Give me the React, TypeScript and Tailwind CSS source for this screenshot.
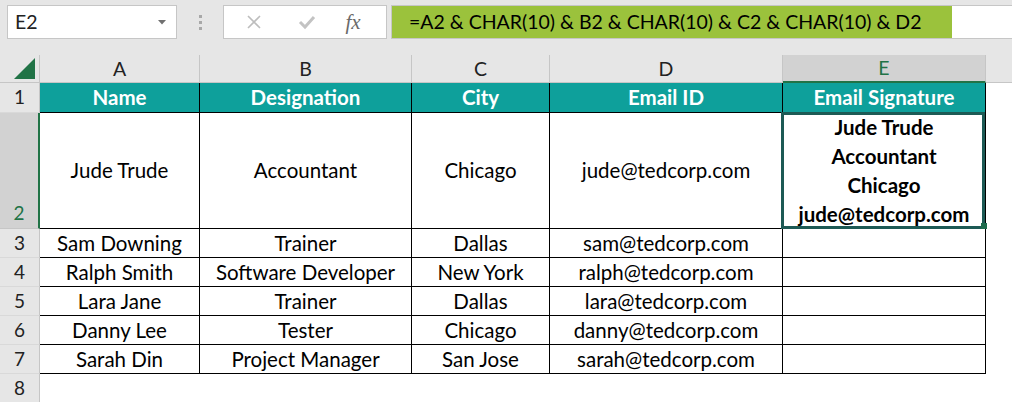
import React from 'react';

const cols = ['A', 'B', 'C', 'D', 'E'];
const widths = ['w-[160px]', 'w-[212px]', 'w-[138px]', 'w-[233px]', 'w-[203px]'];
const headers = ['Name', 'Designation', 'City', 'Email ID', 'Email Signature'];

const rows = [
  ['Sam Downing', 'Trainer', 'Dallas', 'sam@tedcorp.com'],
  ['Ralph Smith', 'Software Developer', 'New York', 'ralph@tedcorp.com'],
  ['Lara Jane', 'Trainer', 'Dallas', 'lara@tedcorp.com'],
  ['Danny Lee', 'Tester', 'Chicago', 'danny@tedcorp.com'],
  ['Sarah Din', 'Project Manager', 'San Jose', 'sarah@tedcorp.com'],
];

const first = ['Jude Trude', 'Accountant', 'Chicago', 'jude@tedcorp.com'];

const RowHead: React.FC<{ n: number; h: string }> = ({ n, h }) => (
  <div className={`w-[40px] ${h} shrink-0 bg-[#e6e6e6] border-r border-b border-r-[#c6c6c6] border-b-[#d9d9d9] flex items-center justify-center text-[19px] text-[#222]`}>
    {n}
  </div>
);

export default function App() {
  return (
    <div className="w-[1012px] h-[402px] overflow-hidden bg-white text-[20.5px] text-black font-['Lato','Liberation_Sans',sans-serif]">
      {/* toolbar */}
      <div className="h-[55px] bg-[#e6e6e6] flex items-start pt-[5px] text-[19.5px]">
        <div className="ml-[7px] w-[170px] h-[34px] bg-white border border-[#c6c6c6] flex items-center justify-between pl-[7px] pr-[10px]">
          <span className="text-[#222]">E2</span>
          <svg width="8" height="5" viewBox="0 0 8 5">
            <polygon points="0,0 8,0 4,4.5" fill="#707070" />
          </svg>
        </div>
        <div className="w-[46px] h-[34px] flex flex-col items-center justify-center gap-[3px]">
          <span className="w-[3px] h-[3px] bg-[#a8a8a8]" />
          <span className="w-[3px] h-[3px] bg-[#a8a8a8]" />
          <span className="w-[3px] h-[3px] bg-[#a8a8a8]" />
        </div>
        <div className="w-[164px] h-[34px] bg-white border border-[#c6c6c6] flex items-center">
          <div className="w-[60px] flex justify-center">
            <svg width="16" height="16" viewBox="0 0 16 16">
              <path d="M2 2 L14 14 M14 2 L2 14" stroke="#bdbdbd" strokeWidth="1.6" />
            </svg>
          </div>
          <div className="w-[46px] flex justify-center">
            <svg width="18" height="16" viewBox="0 0 18 16">
              <path d="M2 8 L7 13 L16 3" stroke="#c3c3c3" strokeWidth="3" fill="none" />
            </svg>
          </div>
          <div className="w-[52px] flex justify-center pr-[6px]">
            <span className="font-['Liberation_Serif',serif] italic text-[21px] text-[#6a6a6a] leading-none">fx</span>
          </div>
        </div>
        <div className="ml-[4px] flex-1 h-[34px] bg-white border-y border-l border-[#c6c6c6] flex">
          <div className="w-[560px] h-full bg-[#9bc23c] flex items-center pl-[17px] whitespace-nowrap">
            =A2 &amp; CHAR(10) &amp; B2 &amp; CHAR(10) &amp; C2 &amp; CHAR(10) &amp; D2
          </div>
        </div>
      </div>

      {/* column headers */}
      <div className="flex h-[28px] bg-[#e6e6e6] text-[19.5px]">
        <div className="w-[40px] shrink-0 border-r border-b border-[#c6c6c6] flex items-end justify-end pr-[4px] pb-[3px]">
          <svg width="21" height="21" viewBox="0 0 21 21">
            <polygon points="21,0 21,21 0,21" fill="#217346" />
          </svg>
        </div>
        {cols.map((c, i) =>
          c === 'E' ? (
            <div key={c} className={`${widths[i]} shrink-0 bg-[#d2d2d2] border-r border-r-[#c6c6c6] border-b-2 border-b-[#217346] flex items-center justify-center text-[#217346]`}>
              {c}
            </div>
          ) : (
            <div key={c} className={`${widths[i]} shrink-0 border-r border-b border-[#c6c6c6] flex items-center justify-center text-[#222]`}>
              {c}
            </div>
          )
        )}
        <div className="flex-1 border-b border-[#c6c6c6]" />
      </div>

      {/* row 1 */}
      <div className="flex h-[30px]">
        <RowHead n={1} h="h-[30px]" />
        {headers.map((t, i) => (
          <div key={t} className={`${widths[i]} shrink-0 bg-[#0ea09b] border-r border-b border-black flex items-center justify-center font-bold text-white`}>
            {t}
          </div>
        ))}
      </div>

      {/* row 2 */}
      <div className="flex h-[116px]">
        <div className="w-[40px] shrink-0 bg-[#d2d2d2] border-r-2 border-r-[#217346] border-b border-b-[#c6c6c6] flex items-end justify-center pb-[1px] text-[19px] text-[#217346]">
          2
        </div>
        {first.map((t, i) => (
          <div key={t} className={`${widths[i]} shrink-0 border-r border-b border-black flex items-center justify-center`}>
            {t}
          </div>
        ))}
        <div className="w-[203px] shrink-0 border-r border-b border-black relative flex flex-col items-center justify-center font-bold leading-[29px]">
          {first.map((t) => (
            <span key={t}>{t}</span>
          ))}
          <div className="absolute -left-[2px] -top-[1px] right-0 -bottom-[1px] border-[3px] border-[#1d5a55]" />
          <div className="absolute -right-[2px] -bottom-[1px] w-[6px] h-[6px] bg-[#1e6b4c]" />
        </div>
      </div>

      {/* rows 3-7 */}
      {rows.map((r, ri) => (
        <div key={ri} className="flex h-[29px]">
          <RowHead n={ri + 3} h="h-[29px]" />
          {r.map((t, i) => (
            <div key={i} className={`${widths[i]} shrink-0 border-r border-b border-black flex items-center justify-center`}>
              {t}
            </div>
          ))}
          <div className="w-[203px] shrink-0 border-r border-b border-black" />
        </div>
      ))}

      {/* row 8 */}
      <div className="flex h-[29px]">
        <RowHead n={8} h="h-[29px]" />
      </div>
    </div>
  );
}
